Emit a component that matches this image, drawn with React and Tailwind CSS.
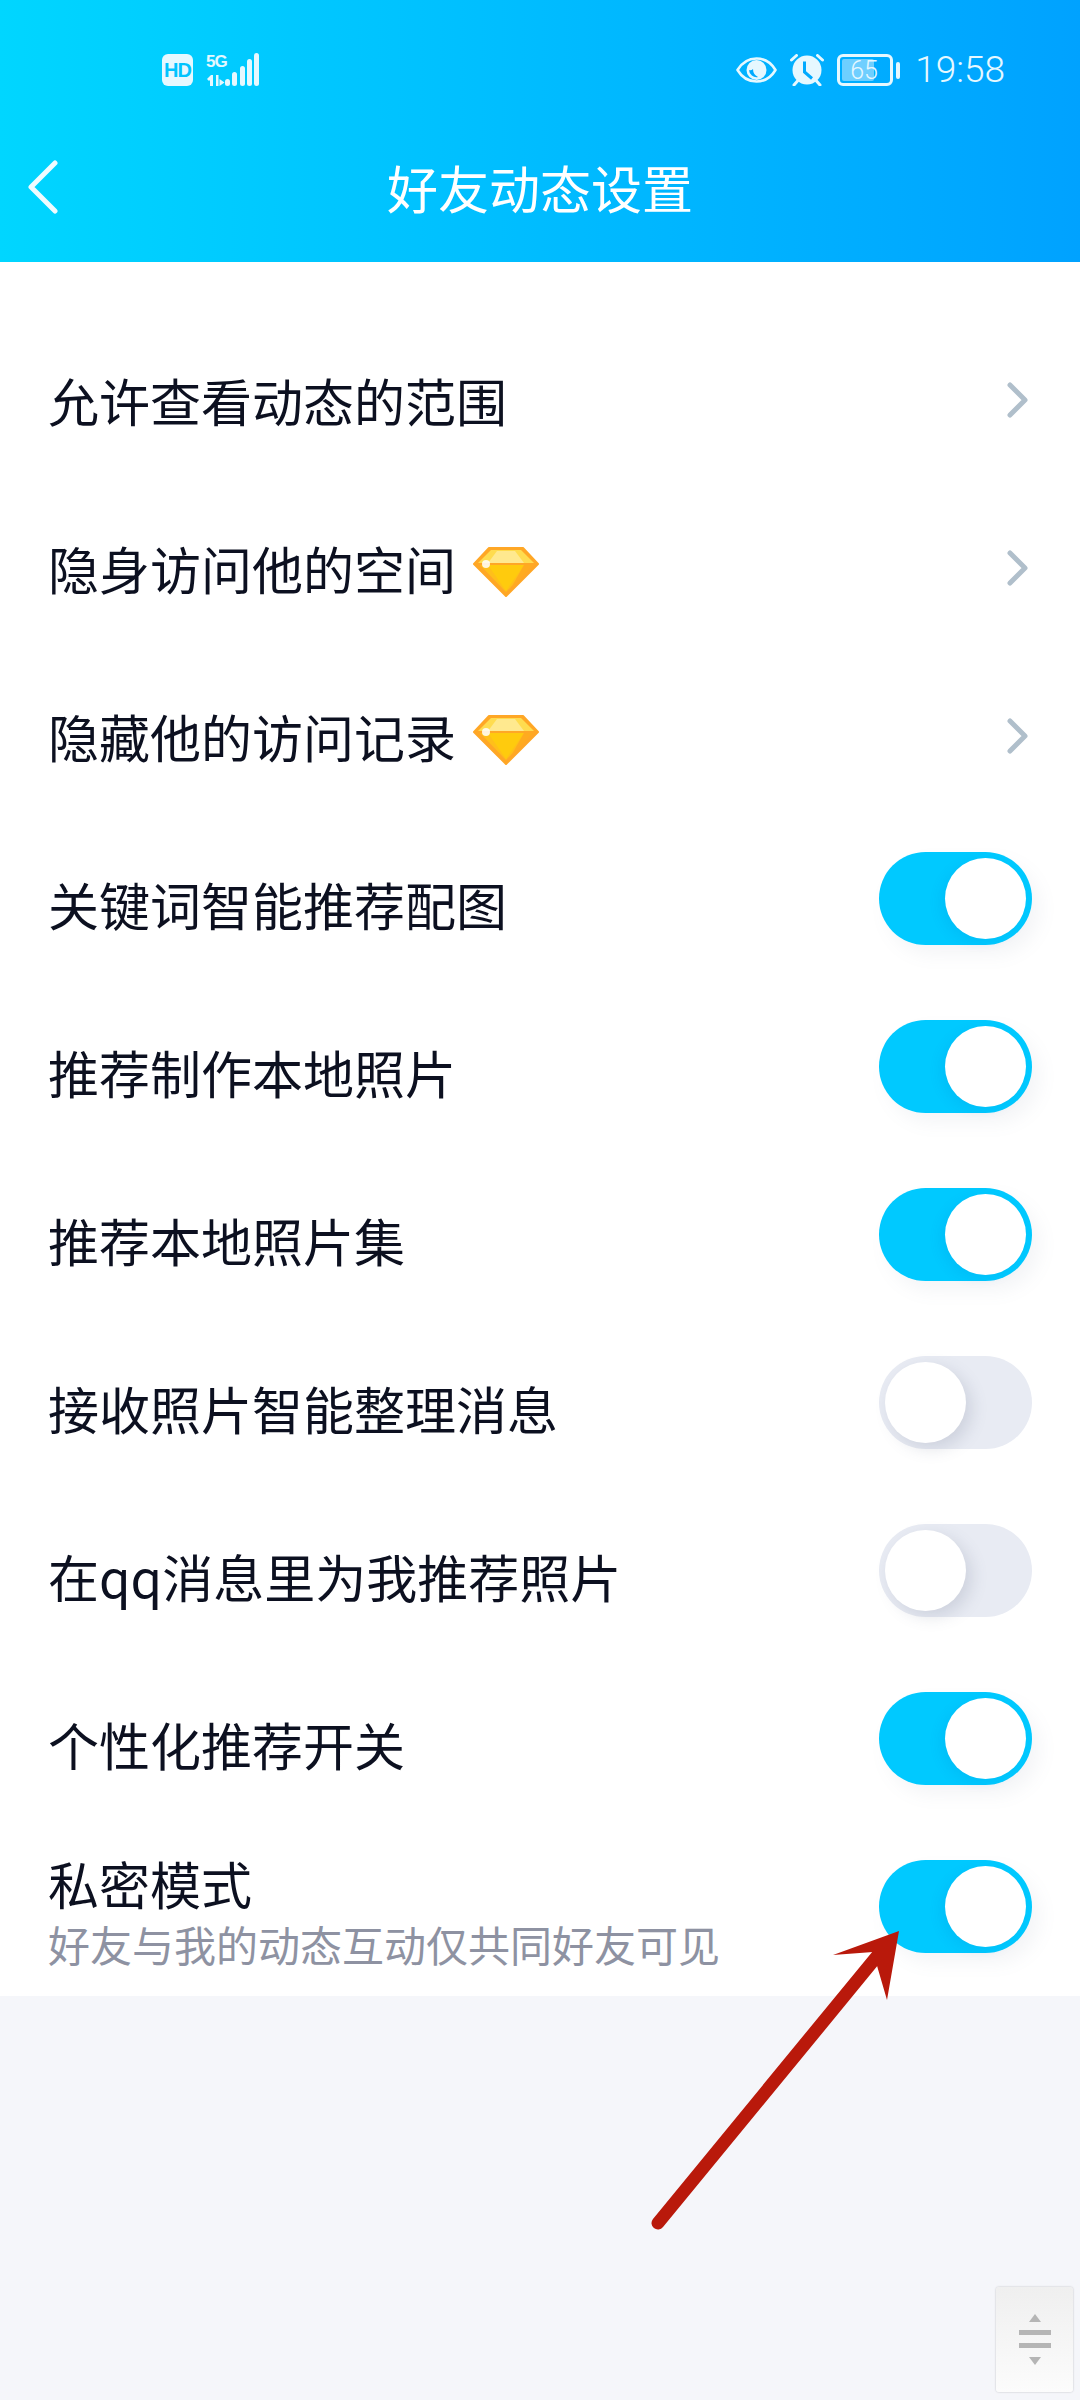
const cjk = { fontFamily: '"Noto Sans CJK SC", "Noto Sans", sans-serif' };

function Diamond() {
  return (
    <svg width="66" height="50" viewBox="0 0 66 50" className="ml-[17px] mt-[7px] shrink-0">
      <polygon points="16,1 50,1 65,17 33,49 1,17" fill="#ffa726" stroke="#ffa726" strokeWidth="2" strokeLinejoin="round" />
      <polygon points="18,3 48,3 61,16 5,16" fill="#ffdc4f" />
      <polygon points="24,4 42,4 51,16 15,16" fill="#ffe98f" />
      <polygon points="7,18 59,18 33,45" fill="#ffbf1a" />
      <polygon points="15,18 51,18 33,44" fill="#ffcb0d" />
      <polygon points="51,18 60,18 38,41" fill="#ffab1f" />
      <circle cx="13" cy="17" r="4" fill="#fff" opacity="0.85" />
    </svg>
  );
}

function Chevron() {
  return (
    <svg width="24" height="38" viewBox="0 0 24 38" fill="none" className="mr-[2px] shrink-0">
      <path d="M4 4l15 15L4 34" stroke="#b0bfcb" strokeWidth="5" strokeLinecap="round" strokeLinejoin="round" />
    </svg>
  );
}

function Toggle({ on }) {
  return (
    <div
      className={`flex mb-[11px] w-[153px] h-[93px] p-[6px] rounded-full shrink-0 ${on ? 'justify-end bg-[#00c9ff] shadow-[8px_10px_18px_rgba(120,130,150,0.08)]' : 'justify-start bg-[#e8ebf3]'}`}
    >
      <div className={`w-[81px] h-[81px] rounded-full bg-white ${on ? 'shadow-[-5px_4px_12px_rgba(0,110,190,0.10)]' : 'shadow-[6px_6px_16px_rgba(90,100,130,0.18)]'}`} />
    </div>
  );
}

function Row({ label, gem, sub, toggle }) {
  return (
    <div className="flex items-center justify-between h-[168px] pl-[48px] pr-[48px]">
      {sub ? (
        <div className="flex flex-col mb-[1px]">
          <span className="text-[51px] leading-[58px] text-[#0c1020]">{label}</span>
          <span className="text-[42px] leading-[50px] text-[#8e92a2] mt-[7px]">{sub}</span>
        </div>
      ) : (
        <div className="flex items-center">
          <span className="text-[51px] leading-[60px] text-[#0c1020]">{label}</span>
          {gem && <Diamond />}
        </div>
      )}
      {toggle === undefined ? <Chevron /> : <Toggle on={toggle} />}
    </div>
  );
}

function StatusLeft() {
  return (
    <div className="flex items-start gap-[12px]">
      <div className="w-[31px] h-[32px] mt-[1px] rounded-[6px] bg-[#e6f8ff] flex items-center justify-center text-[#00c4ff] text-[20px] font-bold leading-none tracking-[-1px]" style={{ fontFamily: '"Liberation Sans", sans-serif' }}>
        HD
      </div>
      <div className="relative w-[54px] h-[34px]">
        <span className="absolute left-[1px] top-[1px] text-[#e6f8ff] text-[17px] font-bold leading-[16px] tracking-[-1px]" style={{ fontFamily: '"Liberation Sans", sans-serif' }}>5G</span>
        <svg width="54" height="34" viewBox="0 0 54 34" className="absolute left-0 top-0" fill="#e6f8ff">
          <path d="M2 26l4-4h2v11H5v-6l-1 1zM11 22h2.500v11H11zM14.500 26l5 3.500-5 3.500z" />
          <rect x="20" y="26" width="5" height="7" rx="2.500" />
          <rect x="27" y="19" width="5" height="14" rx="2.500" />
          <rect x="35" y="13" width="5" height="20" rx="2.500" />
          <rect x="42" y="6" width="5" height="27" rx="2.500" />
          <rect x="49" y="0" width="5" height="33" rx="2.500" />
        </svg>
      </div>
    </div>
  );
}

function StatusRight() {
  return (
    <div className="flex items-center">
      <svg width="41" height="26" viewBox="0 0 41 26" className="mr-[12px]">
        <path d="M1.500 13C6 5.500 13 1.500 20.500 1.500S35 5.500 39.500 13C35 20.500 28 24.500 20.500 24.500S6 20.500 1.500 13Z" fill="none" stroke="#e6f8ff" strokeWidth="2.600" strokeLinejoin="round" />
        <circle cx="20.500" cy="13" r="10" fill="#e6f8ff" />
        <path d="M13 13a7.500 7.500 0 0 0 9 7a9 9 0 0 1-5-8a4 4 0 0 1-4 1Z" fill="#00aaff" />
      </svg>
      <svg width="36" height="32" viewBox="0 0 36 32" className="mr-[12px]">
        <circle cx="18" cy="16" r="14.500" fill="#e6f8ff" />
        <path d="M2.500 6l5-4.500M33.500 6l-5-4.500" stroke="#e6f8ff" strokeWidth="3" strokeLinecap="round" />
        <path d="M5 31l3.500-4M31 31l-3.500-4" stroke="#e6f8ff" strokeWidth="3" strokeLinecap="round" />
        <path d="M15.500 7.500v10.500l7.500 6.500" fill="none" stroke="#00aaff" strokeWidth="3" />
      </svg>
      <div className="relative w-[56px] h-[32px] rounded-[6px] border-[3px] border-[#e6f8ff] p-[2px] flex">
        <div className="w-[32px] bg-[#6fcfff] rounded-[2px]" />
        <span className="absolute left-[10px] top-0 bottom-0 flex items-center text-[#e6f8ff] text-[25px] leading-none" style={{ fontFamily: 'Roboto, sans-serif', fontWeight: 300 }}>65</span>
      </div>
      <div className="w-[4px] h-[17px] rounded-full bg-[#e6f8ff] ml-[3px] mr-[15px]" />
      <span className="text-[37px] leading-[34px] text-[#e6f8ff]" style={{ fontFamily: 'Roboto, sans-serif', fontWeight: 300 }}>19:58</span>
    </div>
  );
}

export default function App() {
  return (
    <div className="relative flex flex-col w-[1080px] h-[2400px] overflow-hidden bg-[#f5f6fa]" style={cjk}>
      <div className="h-[262px] shrink-0 pt-[53px] bg-gradient-to-r from-[#00d6ff] via-[#00bcff] to-[#00a2ff]">
        <div className="flex items-center justify-between h-[34px] pl-[162px] pr-[75px]">
          <StatusLeft />
          <StatusRight />
        </div>
        <div className="grid grid-cols-[1fr_auto_1fr] items-center h-[60px] mt-[70px]">
          <svg width="30" height="54" viewBox="0 0 30 54" fill="none" className="ml-[28px]">
            <path d="M27 3L3 27l24 24" stroke="#f0fbff" strokeWidth="5" strokeLinecap="round" strokeLinejoin="round" />
          </svg>
          <span className="text-[51px] leading-[60px] text-white">好友动态设置</span>
        </div>
      </div>

      <div className="bg-white pt-[54px]">
        <Row label="允许查看动态的范围" />
        <Row label="隐身访问他的空间" gem />
        <Row label="隐藏他的访问记录" gem />
        <Row label="关键词智能推荐配图" toggle={true} />
        <Row label="推荐制作本地照片" toggle={true} />
        <Row label="推荐本地照片集" toggle={true} />
        <Row label="接收照片智能整理消息" toggle={false} />
        <Row label="在qq消息里为我推荐照片" toggle={false} />
        <Row label="个性化推荐开关" toggle={true} />
        <Row label="私密模式" sub="好友与我的动态互动仅共同好友可见" toggle={true} />
      </div>

      {/* annotation arrow drawn over the page */}
      <svg width="1080" height="2400" className="absolute left-0 top-0 pointer-events-none">
        <path d="M658 2223L878 1955" stroke="#b9190b" strokeWidth="13" strokeLinecap="round" />
        <polygon points="899,1931 833,1955 873,1952 887,2000" fill="#b9190b" />
      </svg>

      {/* floating scroll handle */}
      <div className="absolute left-[996px] top-[2287px] w-[77px] h-[105px] rounded-[3px] bg-gradient-to-b from-[#efefef] to-[#fcfcfc] shadow-[0_0_2px_rgba(0,0,0,0.25)] flex flex-col items-center justify-center">
        <div className="w-0 h-0 border-x-[6px] border-x-transparent border-b-[8px] border-b-[#b5b5b5] mb-[8px]" />
        <div className="w-[32px] h-[5px] bg-[#b5b5b5] mb-[8px]" />
        <div className="w-[32px] h-[5px] bg-[#b5b5b5] mb-[9px]" />
        <div className="w-0 h-0 border-x-[6px] border-x-transparent border-t-[8px] border-t-[#b5b5b5]" />
      </div>
    </div>
  );
}
